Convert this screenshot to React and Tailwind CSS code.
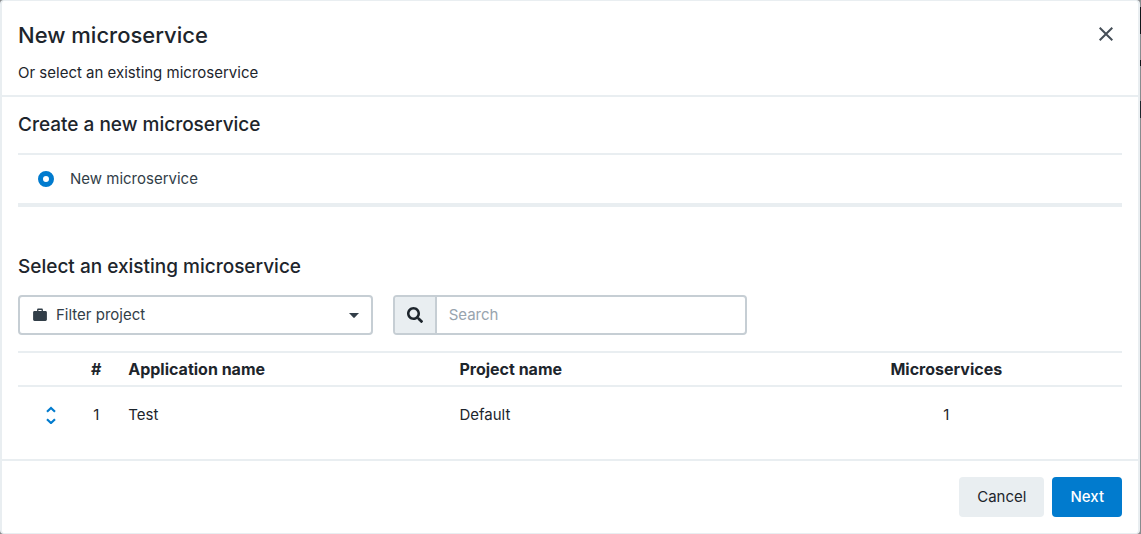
import { FaSearch } from "react-icons/fa";

function BriefcaseIcon() {
  return (
    <svg viewBox="0 0 14 14" className="size-3.5" fill="currentColor" aria-hidden="true">
      <path
        fillRule="evenodd"
        d="M5.4.6h3.200c.8 0 1.300.5 1.300 1.300v1.100h2.600c.8 0 1.400.6 1.400 1.400v7.200c0 .8-.6 1.400-1.400 1.400H1.500C.7 13 .1 12.400.1 11.600V4.400C.1 3.600.7 3 1.500 3h2.600V1.900C4.100 1.100 4.600.6 5.400.6zM5.400 1.900V3h3.200V1.900z"
      />
    </svg>
  );
}

function ExpandIcon() {
  return (
    <svg
      viewBox="0 0 10 18"
      className="mx-auto h-[18px] w-2.5"
      fill="none"
      stroke="currentColor"
      strokeWidth="2.2"
      aria-hidden="true"
    >
      <path d="M1 5.700 5 2 9 5.700M1 13.300 5 17 9 13.300" />
    </svg>
  );
}

function CloseIcon() {
  return (
    <svg viewBox="0 0 14 14" className="size-3.5" fill="none" stroke="currentColor" strokeWidth="2" aria-hidden="true">
      <path d="M.7.7 13.300 13.300M13.300.7.7 13.300" />
    </svg>
  );
}

function Caret() {
  return (
    <svg viewBox="0 0 10 5" className="pointer-events-none absolute top-[18px] right-3.5 h-[5px] w-2.5" fill="currentColor" aria-hidden="true">
      <path d="M0 0H10L5.700 4.600Q5 5.200 4.300 4.600Z" />
    </svg>
  );
}

export default function App() {
  return (
    <div className="min-h-screen bg-[linear-gradient(#888b8e_7px,#11161a_7px_34px,#888b8e_34px_60px,#11161a_60px_66px,#888b8e_66px_101px,#1d252c_101px_118px,#888b8e_118px)] pr-px font-['Inter',sans-serif] text-[15px] leading-6 text-[#1d252c]">
      <div
        role="dialog"
        aria-labelledby="dialog-title"
        className="flex min-h-screen flex-col rounded-sm border-x-2 border-y border-[#e9eef1] bg-white"
      >
        <header className="flex items-start justify-between border-b-2 border-[#e9eef1] px-4 pt-4 pb-2.5">
          <div>
            <h1 id="dialog-title" className="mb-2 text-[22px] leading-9 font-medium">
              New microservice
            </h1>
            <p>Or select an existing microservice</p>
          </div>
          <button type="button" aria-label="Close" className="p-2.5 -mr-px text-[#454e57]">
            <CloseIcon />
          </button>
        </header>

        <main className="flex-1 p-4">
          <section>
            <h2 className="mb-4 text-[19px] leading-6 font-medium">Create a new microservice</h2>
            <label className="flex h-[54px] items-center gap-4 border-t-2 border-b-4 border-[#e9eef1] px-5 text-[#323e48]">
              <input
                type="radio"
                name="microservice"
                defaultChecked
                className="size-4 appearance-none rounded-full border-2 border-[#c6ced4] bg-white checked:border-5 checked:border-[#017bce]"
              />
              New microservice
            </label>
          </section>

          <section className="mt-12">
            <h2 className="mb-4 text-[19px] leading-6 font-medium">Select an existing microservice</h2>
            <div className="grid grid-cols-3 gap-5">
              <div className="relative text-[#323e48]">
                <span className="pointer-events-none absolute top-[13px] left-[15px]">
                  <BriefcaseIcon />
                </span>
                <select
                  aria-label="Filter project"
                  className="h-10 w-full appearance-none rounded border-2 border-[#c6ced4] bg-white pr-8 pl-9"
                >
                  <option>Filter project</option>
                </select>
                <Caret />
              </div>
              <div className="flex h-10 overflow-hidden rounded border-2 border-[#c6ced4]">
                <span className="flex w-[42px] shrink-0 items-center justify-center border-r-2 border-[#c6ced4] bg-[#e9eef1]">
                  <FaSearch className="size-4" aria-hidden="true" />
                </span>
                <input
                  type="search"
                  aria-label="Search"
                  placeholder="Search"
                  className="w-full min-w-0 px-3 outline-none placeholder:text-[#98a4ae]"
                />
              </div>
            </div>

            <table className="mt-4 w-full table-fixed border-collapse">
              <colgroup>
                <col className="w-[6%]" />
                <col className="w-6" />
                <col className="w-[30%]" />
                <col className="w-[30%]" />
                <col />
              </colgroup>
              <thead>
                <tr className="h-[34px] border-y-2 border-[#e9eef1] text-base font-semibold">
                  <th scope="col" aria-label="Expand" />
                  <th scope="col">#</th>
                  <th scope="col" className="pl-5 text-left">Application name</th>
                  <th scope="col" className="pl-5 text-left">Project name</th>
                  <th scope="col">Microservices</th>
                </tr>
              </thead>
              <tbody>
                <tr className="h-[57px]">
                  <td>
                    <button type="button" aria-label="Expand Test" className="block w-full text-[#017bce]">
                      <ExpandIcon />
                    </button>
                  </td>
                  <td className="text-center">1</td>
                  <td className="pl-5">Test</td>
                  <td className="pl-5">Default</td>
                  <td className="text-center">1</td>
                </tr>
              </tbody>
            </table>
          </section>
        </main>

        <footer className="flex justify-end gap-2 border-t-2 border-[#e9eef1] p-4">
          <button type="button" className="h-10 rounded bg-[#e9eef1] px-[18px]">Cancel</button>
          <button type="button" className="h-10 rounded bg-[#017bce] px-[18px] font-medium text-white">Next</button>
        </footer>
      </div>
    </div>
  );
}
